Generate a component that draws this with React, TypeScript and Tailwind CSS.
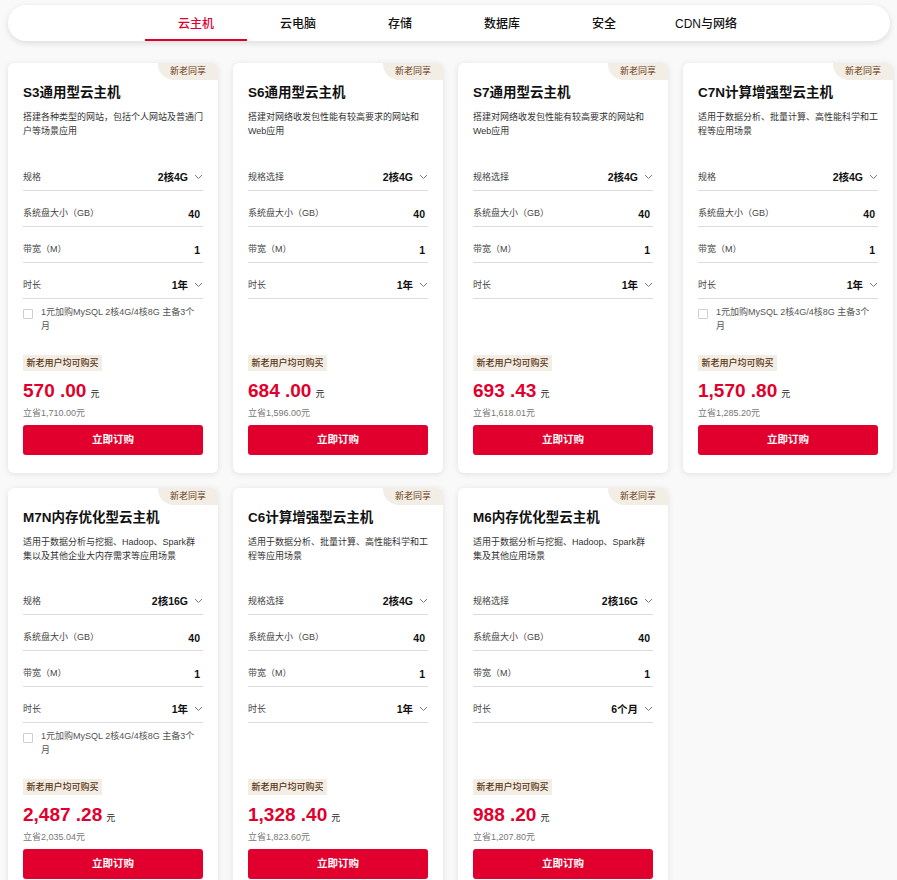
const tabs = ["云主机", "云电脑", "存储", "数据库", "安全", "CDN与网络"]

type Product = {
  name: string
  desc: string
  specLabel: string
  spec: string
  duration: string
  mysql: boolean
  int: string
  dec: string
  save: string
}

const products: Product[] = [
  { name: "S3通用型云主机", desc: "搭建各种类型的网站，包括个人网站及普通门户等场景应用", specLabel: "规格", spec: "2核4G", duration: "1年", mysql: true, int: "570", dec: ".00", save: "1,710.00" },
  { name: "S6通用型云主机", desc: "搭建对网络收发包性能有较高要求的网站和Web应用", specLabel: "规格选择", spec: "2核4G", duration: "1年", mysql: false, int: "684", dec: ".00", save: "1,596.00" },
  { name: "S7通用型云主机", desc: "搭建对网络收发包性能有较高要求的网站和Web应用", specLabel: "规格选择", spec: "2核4G", duration: "1年", mysql: false, int: "693", dec: ".43", save: "1,618.01" },
  { name: "C7N计算增强型云主机", desc: "适用于数据分析、批量计算、高性能科学和工程等应用场景", specLabel: "规格", spec: "2核4G", duration: "1年", mysql: true, int: "1,570", dec: ".80", save: "1,285.20" },
  { name: "M7N内存优化型云主机", desc: "适用于数据分析与挖掘、Hadoop、Spark群集以及其他企业大内存需求等应用场景", specLabel: "规格", spec: "2核16G", duration: "1年", mysql: true, int: "2,487", dec: ".28", save: "2,035.04" },
  { name: "C6计算增强型云主机", desc: "适用于数据分析、批量计算、高性能科学和工程等应用场景", specLabel: "规格选择", spec: "2核4G", duration: "1年", mysql: false, int: "1,328", dec: ".40", save: "1,823.60" },
  { name: "M6内存优化型云主机", desc: "适用于数据分析与挖掘、Hadoop、Spark群集及其他应用场景", specLabel: "规格选择", spec: "2核16G", duration: "6个月", mysql: false, int: "988", dec: ".20", save: "1,207.80" },
]

function Chevron() {
  return (
    <svg width="9" height="6" viewBox="0 0 9 6" className="ml-[6px]">
      <polyline points="1,1 4.5,4.5 8,1" fill="none" stroke="#777" strokeWidth="1" />
    </svg>
  )
}

function Row({ label, value, select }: { label: string; value: string; select?: boolean }) {
  return (
    <div className="flex items-center justify-between h-[36px] pt-[14px] pb-[5px] border-b border-[#dcdcdc]">
      <span className="text-[9px] leading-[16px] text-[#444]">{label}</span>
      <span className={select ? "flex items-center" : "pr-[3px]"}>
        <span className="text-[10.5px] leading-[16px] font-bold text-[#111]">{value}</span>
        {select && <Chevron />}
      </span>
    </div>
  )
}

function Card({ p }: { p: Product }) {
  return (
    <div className="relative flex flex-col bg-white rounded-[6px] shadow-[0_1px_6px_rgba(0,0,0,0.1)] px-[15px] pt-[20px] pb-[18px]">
      <span className="absolute top-0 right-0 h-[17px] px-[12px] rounded-tr-[6px] rounded-bl-[16px] bg-[#f2ede5] text-[9px] leading-[17px] text-[#6b3c12]">
        新老同享
      </span>
      <h3 className="text-[13.5px] leading-[20px] font-bold text-[#111]">{p.name}</h3>
      <p className="mt-[7px] h-[28px] text-[9px] leading-[14px] text-[#333]">{p.desc}</p>

      <div className="mt-[16.5px]">
        <Row label={p.specLabel} value={p.spec} select />
        <Row label="系统盘大小（GB）" value="40" />
        <Row label="带宽（M）" value="1" />
        <Row label="时长" value={p.duration} select />
      </div>

      {p.mysql && (
        <label className="mt-[6px] flex items-start gap-[8px]">
          <span className="mt-[4px] w-[10px] h-[10px] shrink-0 border border-[#cfcfcf] rounded-[1px] bg-white" />
          <span className="w-[158px] text-[9px] leading-[14px] text-[#555]">1元加购MySQL 2核4G/4核8G 主备3个月</span>
        </label>
      )}

      <div className="mt-auto pt-[22px] flex flex-col">
        <span className="self-start h-[16px] px-[3.5px] bg-[#f2ede5] text-[9px] leading-[16px] font-medium text-[#5a3410]">
          新老用户均可购买
        </span>
        <div className="mt-[8px] h-[24px] flex items-baseline leading-[24px] overflow-hidden">
          <span className="text-[19px] font-bold text-[#e1002d]">
            {p.int} {p.dec}
          </span>
          <span className="ml-[4px] text-[9px] text-[#222]">元</span>
        </div>
        <p className="mt-[3px] text-[9px] leading-[14px] text-[#777]">立省{p.save}元</p>
        <button className="mt-[5px] h-[30px] rounded-[3px] bg-[#e1002d] text-white text-[10.5px] font-bold">
          立即订购
        </button>
      </div>
    </div>
  )
}

export default function App() {
  return (
    <div className="min-h-screen bg-[#f9f9f9] pt-[5px] pl-2 pr-1 font-['Liberation_Sans','Noto_Sans_CJK_SC',sans-serif]">
      <nav className="h-9 mr-[3px] pl-[4px] flex justify-center bg-white rounded-full shadow-[0_2px_6px_rgba(0,0,0,0.12)]">
        {tabs.map((t, i) => (
          <div
            key={t}
            className={
              i === 0
                ? "w-[102px] flex items-center justify-center pt-[4px] border-b-2 border-[#e1002d] text-[12px] font-medium text-[#e1002d]"
                : "w-[102px] flex items-center justify-center pt-[4px] border-b-2 border-transparent text-[12px] font-medium text-[#111]"
            }
          >
            {t}
          </div>
        ))}
      </nav>

      <div className="mt-[22px] grid grid-cols-[repeat(4,210px)] gap-[15px]">
        {products.map((p) => (
          <Card key={p.name} p={p} />
        ))}
      </div>
    </div>
  )
}
